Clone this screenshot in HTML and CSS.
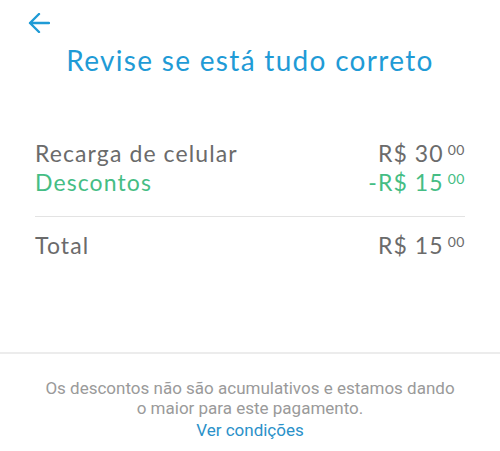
FILE: index.html
```html
<!DOCTYPE html>
<html>
    <head>
        <title>Revise</title>
        <link rel="stylesheet" href="styles.css">
    </head>
    <body>
        <div class="page">
            <div class="top-bar">
                <svg class="back" width="22" height="20" viewBox="0 0 22 20">
                    <path d="M21 10H2M11 1L2 10l9 9" fill="none" stroke="#1f9bd6" stroke-width="2.4" stroke-linecap="round" stroke-linejoin="round"/>
                </svg>
            </div>
            <p class="tittle">Revise se está tudo correto</p>

            <div class="summary">
                <div class="row">
                    <span>Recarga de celular</span>
                    <span class="price">R$ 30<sup>00</sup></span>
                </div>
                <div class="row green">
                    <span>Descontos</span>
                    <span class="price">-R$ 15<sup>00</sup></span>
                </div>
                <div class="line"></div>
                <div class="row">
                    <span>Total</span>
                    <span class="price">R$ 15<sup>00</sup></span>
                </div>
            </div>
        </div>

        <div class="footer">
            <p class="note">Os descontos não são acumulativos e estamos dando<br>o maior para este pagamento.</p>
            <a class="link">Ver condições</a>
        </div>
    </body>
</html>
```

FILE: styles.css
```css
body {
    margin: 0;
    background-color: white;
    font-family: Lato, "Open Sans", sans-serif;
    height: 451px;
    display: flex;
    flex-direction: column;
}
.page {
    flex: 1;
}
.top-bar {
    padding: 13px 0 0 28px;
    height: 20px;
}
.back {
    display: block;
}
.tittle {
    margin: 10px 0 0 0;
    text-align: center;
    font-size: 28px;
    letter-spacing: 1.3px;
    color: #1f9bd6;
}
.summary {
    margin: 62px 35px 0 35px;
}
.row {
    display: flex;
    justify-content: space-between;
    font-size: 23px;
    letter-spacing: 1.1px;
    line-height: 29px;
    color: #6b6b6b;
}
.green {
    color: #45bd84;
}
.price sup {
    font-size: 14px;
    letter-spacing: 0.5px;
    vertical-align: 7px;
    line-height: 0;
    margin-left: 4px;
}
.line {
    height: 1px;
    background-color: #e3e3e3;
    margin: 19px 0 14px 0;
}
.footer {
    border-top: 2px solid #ececec;
    text-align: center;
    font-family: Roboto, sans-serif;
    padding: 24px 0 11px 0;
}
.note {
    margin: 0;
    font-size: 17px;
    line-height: 20px;
    color: #9a9a9a;
}
.link {
    display: inline-block;
    margin-top: 2px;
    font-size: 17px;
    color: #2a91c9;
}
```
